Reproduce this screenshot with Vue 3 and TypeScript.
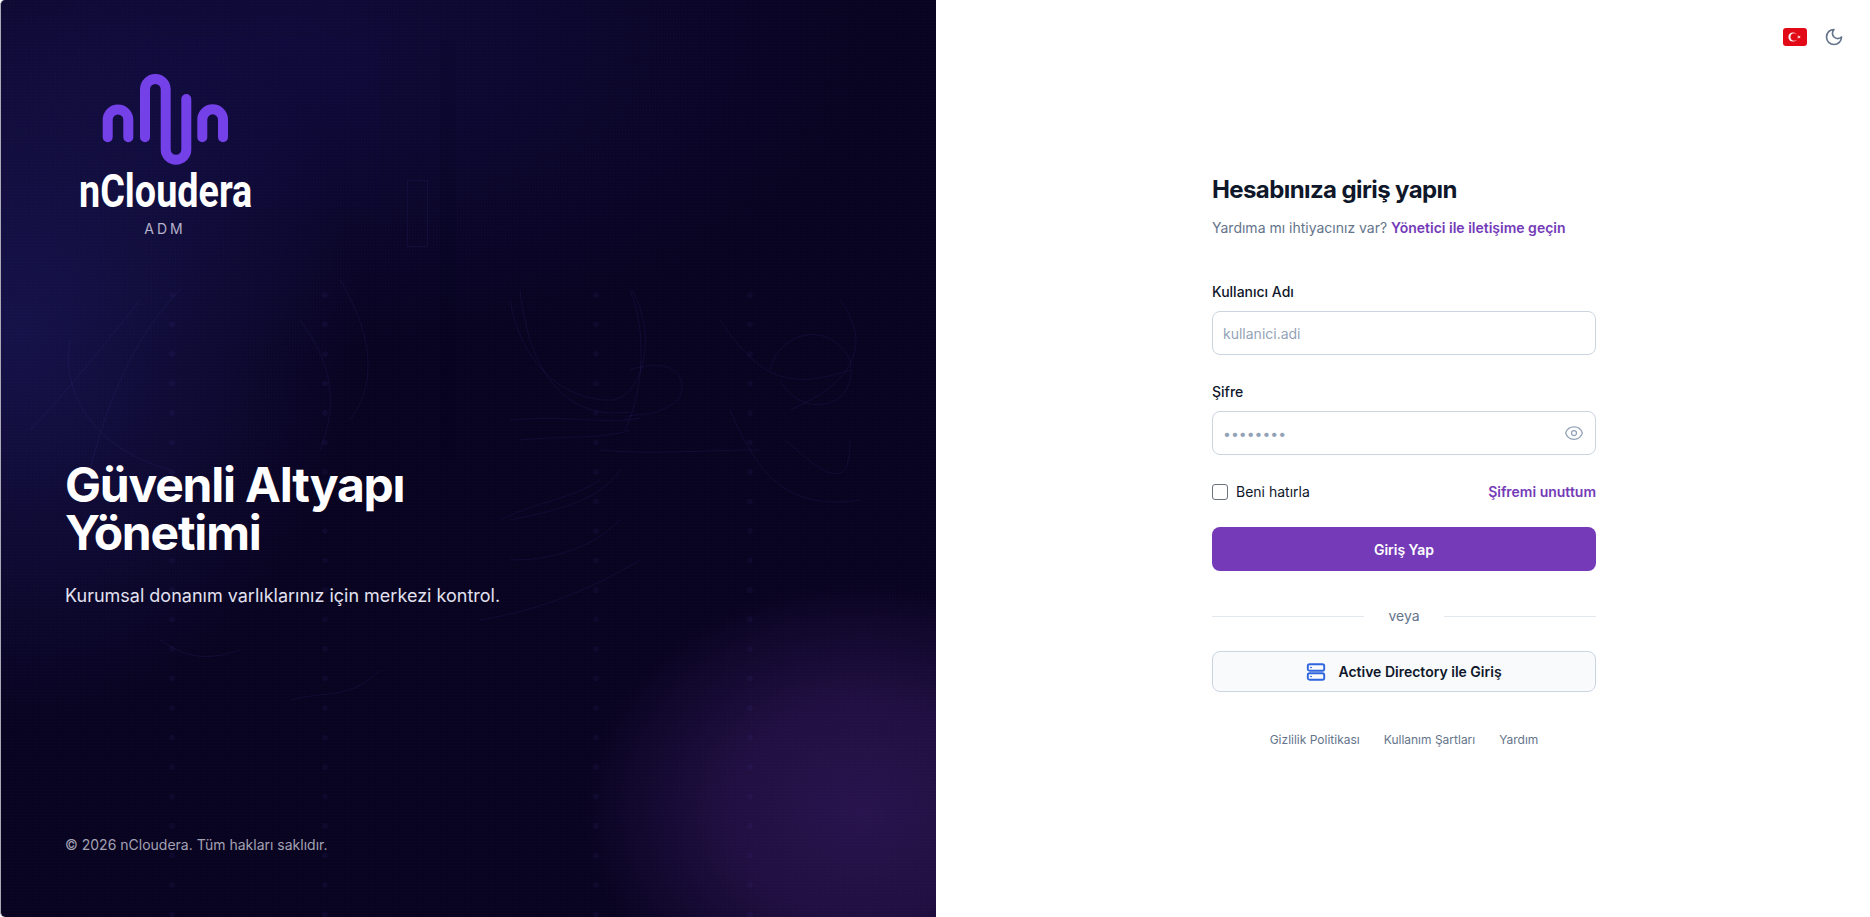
<script setup lang="ts">
const dotColumns: number[] = [172, 325, 596, 750]
const dotRows: number[] = Array.from({ length: 22 }, (_, i) => 295 + i * 29.5)
const curves: string[] = [
  'M510 300 C520 360 560 400 610 400 C640 400 660 340 632 290',
  'M520 290 C530 380 570 420 630 412',
  'M630 290 C650 340 640 400 625 430',
  'M630 370 C690 350 690 400 670 405 C650 420 630 410 625 420',
  'M510 420 C570 415 610 425 640 418',
  'M520 440 C570 435 600 440 630 430',
  'M600 450 C650 455 700 450 760 450',
  'M720 320 C760 380 790 390 850 370',
  'M780 380 C800 420 860 410 850 360 C830 320 780 330 770 370',
  'M730 410 C760 480 790 510 860 500',
  'M840 300 C870 340 860 380 790 410',
  'M785 440 C830 480 850 490 850 440',
  'M500 520 C540 500 570 500 600 480',
  'M510 520 C560 510 600 500 620 470',
  'M510 560 C550 560 590 550 620 520',
  'M140 300 C100 350 60 400 30 430',
  'M180 290 C140 330 110 390 90 470',
  'M70 340 C60 400 100 450 170 470',
  'M340 280 C370 330 380 380 350 420',
  'M300 320 C330 360 340 400 320 450',
  'M480 620 C540 610 590 590 640 560',
  'M290 700 C330 690 350 700 380 670',
  'M160 640 C190 660 210 660 240 650',
]
</script>

<template>
  <main class="page">
    <section class="hero">
      <div class="hero-bg"></div>
      <svg class="hero-lines" viewBox="0 0 936 917" width="936" height="917" aria-hidden="true">
        <rect x="135" y="38" width="245" height="170" fill="#4a46c8" opacity=".02" />
        <rect x="407.5" y="180.5" width="20" height="66" fill="none" stroke="#5a55c8" stroke-opacity=".09" />
        <rect x="440" y="40" width="16" height="420" fill="#000010" opacity=".1" />
        <path v-for="(d, i) in curves" :key="i" :d="d" fill="none" stroke="#5552c4" stroke-opacity=".11" />
        <g v-for="x in dotColumns" :key="x">
          <circle v-for="y in dotRows" :key="y" :cx="x" :cy="y" r="3" fill="#5552c4" opacity=".08" />
        </g>
      </svg>

      <div class="brand">
        <svg class="brand-mark" viewBox="0 0 130 92" width="130" height="92" aria-hidden="true">
          <g fill="none" stroke="#7440e8" stroke-width="10" stroke-linecap="round" stroke-linejoin="round">
            <path d="M7.7 63.3V45.7a10.3 10.3 0 0 1 20.6 0V63.3" />
            <path d="M45 63.3V15.3a10.3 10.3 0 0 1 20.7 0V75.5a10.3 10.3 0 0 0 20.6 0V25" />
            <path d="M102.3 63.3V45.7a10.3 10.3 0 0 1 20.7 0V63.3" />
          </g>
        </svg>
        <div class="brand-name">nCloudera</div>
        <div class="brand-sub">ADM</div>
      </div>

      <div class="hero-copy">
        <h1>Güvenli Altyapı<br />Yönetimi</h1>
        <p>Kurumsal donanım varlıklarınız için merkezi kontrol.</p>
      </div>

      <footer class="copyright">© 2026 nCloudera. Tüm hakları saklıdır.</footer>
    </section>

    <section class="panel">
      <div class="toolbar">
        <button class="icon-btn" type="button" aria-label="Türkçe">
          <svg viewBox="0 0 24 18" width="24" height="18">
            <rect width="24" height="18" rx="3" fill="#e30a17" />
            <circle cx="10" cy="9" r="4.6" fill="#fff" />
            <circle cx="11.2" cy="9" r="3.7" fill="#e30a17" />
            <path d="M14 9l3.6-1.2-2.2 3-.02-3.6 2.2 2.9z" fill="#fff" />
          </svg>
        </button>
        <button class="icon-btn" type="button" aria-label="Tema">
          <svg viewBox="0 0 24 24" width="20" height="20" fill="none" stroke="#64748b" stroke-width="2" stroke-linecap="round" stroke-linejoin="round">
            <path d="M12 3a6 6 0 0 0 9 9 9 9 0 1 1-9-9z" />
          </svg>
        </button>
      </div>

      <div class="form-wrap">
        <h2>Hesabınıza giriş yapın</h2>
        <p class="help">Yardıma mı ihtiyacınız var? <a href="#">Yönetici ile iletişime geçin</a></p>

        <form class="form" @submit.prevent>
          <label class="field">
            <span>Kullanıcı Adı</span>
            <input type="text" placeholder="kullanici.adi" />
          </label>
          <label class="field">
            <span>Şifre</span>
            <span class="input-wrap">
              <input type="password" placeholder="••••••••" />
              <svg class="eye" viewBox="0 0 24 24" width="20" height="20" fill="none" stroke="#94a3b8" stroke-width="1.5" stroke-linecap="round" stroke-linejoin="round">
                <path d="M2.04 12.32a1 1 0 0 1 0-.64C3.42 7.51 7.36 4.5 12 4.5s8.57 3.01 9.96 7.18a1 1 0 0 1 0 .64C20.58 16.49 16.64 19.5 12 19.5s-8.57-3.01-9.96-7.18z" />
                <circle cx="12" cy="12" r="3" />
              </svg>
            </span>
          </label>

          <div class="row">
            <label class="remember">
              <input type="checkbox" />
              <span>Beni hatırla</span>
            </label>
            <a href="#" class="forgot">Şifremi unuttum</a>
          </div>

          <button class="primary" type="submit">Giriş Yap</button>

          <div class="divider"><span>veya</span></div>

          <button class="secondary" type="button">
            <svg viewBox="0 0 20 20" width="20" height="20" fill="none" stroke="#2f66e0" stroke-width="1.9">
              <rect x="1.8" y="2.3" width="16.4" height="6.4" rx="1.8" />
              <rect x="1.8" y="11.3" width="16.4" height="6.4" rx="1.8" />
              <circle cx="5" cy="5.5" r=".5" fill="#2f66e0" stroke-width="1" />
              <circle cx="5" cy="14.5" r=".5" fill="#2f66e0" stroke-width="1" />
            </svg>
            <span>Active Directory ile Giriş</span>
          </button>
        </form>

        <nav class="links">
          <a href="#">Gizlilik Politikası</a>
          <a href="#">Kullanım Şartları</a>
          <a href="#">Yardım</a>
        </nav>
      </div>
    </section>
  </main>
</template>

<style scoped>
.page {
  display: grid;
  grid-template-columns: 936px 1fr;
  height: 917px;
  overflow: hidden;
  font-family: Inter, "Noto Sans", sans-serif;
  color: #0f172a;
  background: #fff;
}

.hero {
  position: relative;
  display: flex;
  flex-direction: column;
  height: 917px;
  padding: 0 64px;
  box-sizing: border-box;
  overflow: hidden;
  color: #fff;
  background: #08031f;
  border-top-left-radius: 5px;
  border-bottom-left-radius: 5px;
  border-left: 1px solid #a9a8b4;
}

.hero-bg {
  position: absolute;
  inset: 0;
  background:
    radial-gradient(ellipse 280px 230px at 860px 810px, rgba(46, 22, 84, 0.85), rgba(46, 22, 84, 0.6) 50%, rgba(46, 22, 84, 0) 100%),
    radial-gradient(ellipse 340px 400px at 20px 330px, rgba(30, 28, 100, 0.6), rgba(30, 28, 100, 0) 100%),
    radial-gradient(ellipse 620px 320px at 280px 40px, rgba(22, 16, 78, 0.55), rgba(22, 16, 78, 0) 100%);
}

.hero-bg::after {
  content: "";
  position: absolute;
  inset: 0;
  background-image:
    repeating-linear-gradient(0deg, rgba(90, 80, 200, 0.02) 0 1px, transparent 1px 3px),
    repeating-linear-gradient(90deg, rgba(90, 80, 200, 0.02) 0 1px, transparent 1px 3px);
}

.hero-lines {
  position: absolute;
  left: -1px;
  top: 0;
}

.brand {
  position: relative;
  display: flex;
  flex-direction: column;
  align-items: center;
  width: 172px;
  margin: 74px 0 0 15px;
}

.brand-mark {
  display: block;
  margin-left: -2px;
}

.brand-name {
  width: 172px;
  height: 46px;
  margin-top: 2px;
  margin-left: -2px;
  font-family: Roboto, Inter, sans-serif;
  font-size: 47px;
  font-weight: 700;
  line-height: 46px;
  white-space: nowrap;
  transform: scaleX(0.803);
  transform-origin: left center;
}

.brand-sub {
  margin-top: 5px;
  margin-left: -2px;
  font-size: 14px;
  line-height: 20px;
  letter-spacing: 3px;
  color: #b5b2c9;
}

.hero-copy {
  position: relative;
  margin-top: 222px;
}

h1 {
  margin: 0;
  font-size: 48px;
  font-weight: 700;
  line-height: 48px;
  letter-spacing: -1.2px;
}

.hero-copy p {
  margin: 25px 0 0;
  font-size: 18px;
  line-height: 28px;
  color: #e2e1f0;
}

.copyright {
  position: relative;
  margin-top: auto;
  margin-bottom: 62px;
  font-size: 14px;
  line-height: 20px;
  color: #a3a2b3;
}

.panel {
  position: relative;
  display: flex;
  flex-direction: column;
  align-items: center;
  padding: 174px 0 0 2px;
  box-sizing: border-box;
}

.toolbar {
  position: absolute;
  top: 27px;
  right: 26px;
  display: flex;
  align-items: center;
  gap: 17px;
}

.icon-btn {
  display: flex;
  padding: 0;
  border: 0;
  background: none;
}

.form-wrap {
  width: 384px;
}

h2 {
  margin: 0;
  font-size: 24px;
  font-weight: 700;
  line-height: 32px;
  letter-spacing: -0.6px;
  color: #0f172a;
}

.help {
  margin: 12px 0 0;
  font-size: 14px;
  line-height: 20px;
  color: #64748b;
}

a {
  text-decoration: none;
}

.help a,
.forgot {
  font-weight: 600;
  color: #743ab7;
}

.form {
  display: flex;
  flex-direction: column;
  margin-top: 44px;
}

.field {
  display: block;
  margin-bottom: 27px;
  font-size: 14px;
  font-weight: 500;
  line-height: 20px;
}

.field > span:first-child {
  display: block;
  margin-bottom: 9px;
}

.input-wrap {
  position: relative;
  display: block;
}

input[type="text"],
input[type="password"] {
  display: block;
  width: 100%;
  height: 44px;
  padding: 0 10px;
  box-sizing: border-box;
  border: 1px solid #cbd5e1;
  border-radius: 8px;
  font: 400 14px Inter, sans-serif;
  color: #0f172a;
  background: #fff;
  outline: none;
}

input::placeholder {
  color: #94a3b8;
  opacity: 1;
}

.eye {
  position: absolute;
  right: 12px;
  top: 12px;
}

.row {
  display: flex;
  align-items: center;
  justify-content: space-between;
  font-size: 14px;
  line-height: 20px;
}

.remember {
  display: flex;
  align-items: center;
  gap: 8px;
  color: #0f172a;
}

.remember input {
  appearance: none;
  width: 16px;
  height: 16px;
  margin: 0;
  border: 1px solid #6b7280;
  border-radius: 3px;
  background: #fff;
}

.primary {
  height: 44px;
  margin-top: 25px;
  border: 0;
  border-radius: 8px;
  font: 600 14px Inter, sans-serif;
  color: #fff;
  background: #743ab7;
}

.divider {
  display: flex;
  align-items: center;
  justify-content: center;
  margin-top: 35px;
  font-size: 14px;
  line-height: 20px;
  color: #64748b;
}

.divider::before,
.divider::after {
  content: "";
  flex: 1;
  height: 1px;
  background: #e2e8f0;
}

.divider span {
  padding: 0 24px;
}

.secondary {
  display: flex;
  align-items: center;
  justify-content: center;
  gap: 12px;
  height: 41px;
  margin-top: 25px;
  border: 1px solid #cbd5e1;
  border-radius: 8px;
  font: 600 14px Inter, sans-serif;
  color: #0f172a;
  background: #f8fafc;
}

.links {
  display: flex;
  justify-content: center;
  gap: 24px;
  margin-top: 40px;
  font-size: 12px;
  line-height: 16px;
}

.links a {
  color: #64748b;
}
</style>

<style>
html,
body {
  margin: 0;
  background: #fff;
}
</style>
